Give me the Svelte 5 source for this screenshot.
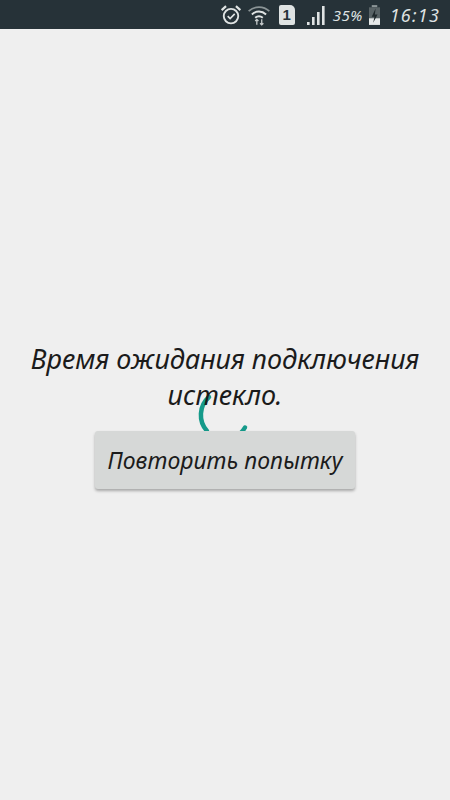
<script>
  let message = 'Время ожидания подключения истекло.';
  let retryLabel = 'Повторить попытку';
  let bars = [
    { x: 1, h: 3 },
    { x: 6, h: 8 },
    { x: 11, h: 13 },
    { x: 16, h: 19 }
  ];
</script>

<div class="screen">
  <header class="status-bar">
    <svg class="alarm" viewBox="0 0 20 20" width="22" height="22" aria-hidden="true">
      <circle cx="10" cy="11" r="6.6" fill="none" stroke="#dfe3e3" stroke-width="1.7" />
      <path d="M7 11l2.2 2.2L13.4 9" fill="none" stroke="#dfe3e3" stroke-width="1.5" />
      <path d="M1.5 5.5L5.5 2M18.5 5.5L14.5 2" fill="none" stroke="#dfe3e3" stroke-width="2" />
    </svg>
    <svg class="wifi" viewBox="0 0 22 20" width="24" height="22" aria-hidden="true">
      <path d="M1.5 6.5C7 1.5 15 1.5 20.5 6.5" fill="none" stroke="#8b9496" stroke-width="1.6" />
      <path d="M4.5 9.5C8.3 6 13.7 6 17.5 9.5" fill="none" stroke="#dfe3e3" stroke-width="1.8" />
      <path d="M7.5 12.5C9.7 10.7 12.3 10.7 14.5 12.5" fill="none" stroke="#dfe3e3" stroke-width="1.8" />
      <path d="M9 19v-5M7.5 15.5L9 14l1.5 1.5M13.5 14v5M12 17.5l1.5 1.5 1.5-1.5" fill="none" stroke="#c4c9ca" stroke-width="1.2" />
    </svg>
    <span class="sim">1</span>
    <svg class="signal" viewBox="0 0 20 20" width="20" height="20" aria-hidden="true">
      {#each bars as bar}
        <rect x={bar.x} y={20 - bar.h} width="2.6" height={bar.h} fill="#dfe3e3" />
      {/each}
    </svg>
    <span class="percent">35%</span>
    <svg class="battery" viewBox="0 0 12 20" width="15" height="22" aria-hidden="true">
      <rect x="3.5" y="1" width="5" height="2" fill="#8b9496" />
      <rect x="1" y="3" width="10" height="16" fill="#596366" />
      <rect x="1" y="13" width="10" height="6" fill="#e6e9e9" />
      <path d="M7 4L3.5 11.5H6L4.8 17L8.8 9.5H6.3Z" fill="#20292c" />
    </svg>
    <span class="clock">16:13</span>
  </header>

  <main class="content">
    <div class="spinner-wrap">
      <svg class="spinner" viewBox="0 0 60 60" width="60" height="60" aria-hidden="true">
        <path d="M14 12A24 24 0 0 0 12 46" fill="none" stroke="#159a8a" stroke-width="4.5" stroke-linecap="round" />
        <path d="M50 42.5A24 24 0 0 1 40 52" fill="none" stroke="#159a8a" stroke-width="4.5" stroke-linecap="round" />
      </svg>
    </div>
    <div class="error">
      <p class="message">{message}</p>
      <button class="retry">{retryLabel}</button>
    </div>
  </main>
</div>

<style>
  :global(body) {
    margin: 0;
    background: #efefef;
  }
  .screen {
    width: 450px;
    height: 800px;
    display: flex;
    flex-direction: column;
    overflow: hidden;
    background: #efefef;
    font-family: "Noto Sans", "DejaVu Sans", sans-serif;
    font-style: italic;
  }
  .status-bar {
    height: 29px;
    flex: none;
    display: flex;
    align-items: center;
    justify-content: flex-end;
    padding: 0 10px 0 0;
    background: #263238;
    color: #dfe3e3;
  }
  .alarm {
    margin-right: 5px;
  }
  .wifi {
    margin-right: 8px;
  }
  .sim {
    width: 16px;
    height: 20px;
    margin-right: 11px;
    background: #dfe3e3;
    color: #263238;
    border-radius: 2px 5px 2px 2px;
    font: bold 15px/20px "Liberation Sans", sans-serif;
    text-align: center;
  }
  .signal {
    margin-right: 7px;
  }
  .percent {
    margin-right: 4px;
    font-size: 15px;
    letter-spacing: 0.5px;
  }
  .battery {
    margin-right: 8px;
  }
  .clock {
    font-size: 18px;
    letter-spacing: 1.2px;
  }
  .content {
    flex: 1;
    display: grid;
    place-items: center;
  }
  .spinner-wrap,
  .error {
    grid-area: 1 / 1;
  }
  .spinner-wrap {
    display: flex;
  }
  .error {
    z-index: 1;
    display: flex;
    flex-direction: column;
    align-items: center;
    margin-top: 1px;
  }
  .message {
    width: 430px;
    margin: 0 0 18px;
    color: #1b1b1b;
    font-size: 27px;
    line-height: 36px;
    text-align: center;
  }
  .retry {
    width: 260px;
    height: 58px;
    padding: 0;
    border: none;
    border-radius: 3px;
    background: #d6d8d7;
    box-shadow: 0 2px 3px rgba(0, 0, 0, 0.3);
    color: #1b1b1b;
    font: italic 23px "Noto Sans", "DejaVu Sans", sans-serif;
    white-space: nowrap;
  }
</style>
